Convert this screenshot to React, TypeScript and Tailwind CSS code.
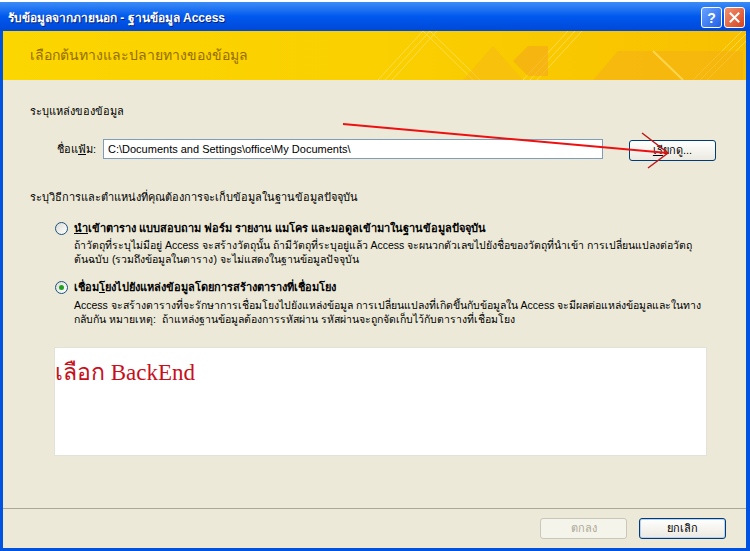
import React from "react";

const thai = "font-['Liberation_Sans','Tahoma','DejaVu_Sans',sans-serif]";

const Radio: React.FC<{ checked?: boolean }> = ({ checked }) => (
  <span className="w-[13px] h-[13px] rounded-full border border-[#1c5180] bg-gradient-to-br from-[#dcdcd5] to-white flex items-center justify-center shrink-0">
    {checked && <span className="w-[5px] h-[5px] rounded-full bg-[#21a121]" />}
  </span>
);

const App: React.FC = () => {
  return (
    <div className={`relative w-[750px] h-[551px] bg-[#0052e0] flex flex-col overflow-hidden ${thai} text-[11px] text-black whitespace-nowrap`}>
      {/* Title bar */}
      <div className="h-[31px] shrink-0 flex items-center pl-[8px] pr-[5px] pt-[2px] bg-gradient-to-b from-[#3b8cf5] via-[#0058ee] to-[#0048d8] border-t-2 border-t-white">
        <span className="text-white font-bold text-[12px] leading-none [text-shadow:1px_1px_0_#0a1e6e]">
          รับข้อมูลจากภายนอก - ฐานข้อมูล Access
        </span>
        <div className="ml-auto flex gap-[2px]">
          <div className="w-[21px] h-[21px] rounded-[3px] border border-white bg-gradient-to-br from-[#6aa2ff] to-[#1f5ee6] flex items-center justify-center text-white font-bold text-[14px] leading-none">
            ?
          </div>
          <div className="w-[21px] h-[21px] rounded-[3px] border border-white bg-gradient-to-br from-[#f2906d] to-[#d4401c] flex items-center justify-center">
            <svg width="11" height="11" viewBox="0 0 11 11">
              <path d="M1.5 1.5 L9.5 9.5 M9.5 1.5 L1.5 9.5" stroke="white" strokeWidth="2" strokeLinecap="square" />
            </svg>
          </div>
        </div>
      </div>

      <div className="flex-1 flex flex-col ml-[3px] mr-[4px] mb-[3px] bg-[#ece9d8]">
        {/* Yellow banner */}
        <div className="relative h-[49px] shrink-0 bg-gradient-to-r from-[#fcd600] via-[#fad000] to-[#f8c000] flex items-center pl-[27px] overflow-hidden">
          <svg className="absolute inset-0" width="743" height="49" viewBox="0 0 743 49">
            <g fill="none" stroke="#ffe36b" strokeWidth="1" opacity="0.7">
              <path d="M375 49 L420 0 M382 49 L427 0 M389 49 L434 0" />
              <path d="M520 49 L565 0 M527 49 L572 0 M534 49 L579 0" />
              <path d="M690 49 L739 0 M697 49 L746 0 M704 49 L753 0" />
              <path d="M420 0 L470 49 M427 0 L477 49" />
            </g>
            <path d="M510 30 L525 15 L545 15 L545 45 L525 45 Z" fill="#f4a81a" opacity="0.6" />
            <path d="M590 49 L615 20 L740 20 L740 49 Z" fill="#f5b015" opacity="0.6" />
            <path d="M460 49 L490 15 L520 49 Z" fill="#f6b818" opacity="0.5" />
            <path d="M650 20 L680 49" stroke="#ffe36b" strokeWidth="2" opacity="0.7" />
          </svg>
          <span className="relative text-[14px] text-[#946c00]">เลือกต้นทางและปลายทางของข้อมูล</span>
        </div>

        {/* Body */}
        <div className="flex-1 flex flex-col">
          <div className="pl-[27px] mt-[24px] leading-[14px]">ระบุแหล่งของข้อมูล</div>

          <div className="flex items-start mt-[21px]">
            <span className="ml-[54px] w-[46px] leading-[20px]">
              ชื่อแ<span className="underline">ฟ้</span>ม:
            </span>
            <div className="w-[500px] h-[20px] bg-white border border-[#7f9db9] flex items-center pl-[4px] text-[11px]">
              C:\Documents and Settings\office\My Documents\
            </div>
            <button className="ml-[26px] mt-[1px] w-[87px] h-[21px] rounded-[3px] border border-[#003c74] bg-gradient-to-b from-white to-[#ebe9e0] flex items-center justify-center text-[11px]">
              <span className="underline">เรี</span>ยกดู...
            </button>
          </div>

          <div className="pl-[27px] mt-[29px] leading-[14px]">
            ระบุวิธีการและตำแหน่งที่คุณต้องการจะเก็บข้อมูลในฐานข้อมูลปัจจุบัน
          </div>

          <div className="flex items-center mt-[17px] ml-[52px] leading-[14px]">
            <Radio />
            <span className="ml-[6px] font-bold">
              <span className="underline">น</span>ำเข้าตาราง แบบสอบถาม ฟอร์ม รายงาน แมโคร และมอดูลเข้ามาในฐานข้อมูลปัจจุบัน
            </span>
          </div>
          <div className="ml-[71px] mt-[3px] leading-[14px] text-[10.5px]">
            <div>ถ้าวัตถุที่ระบุไม่มีอยู่ Access จะสร้างวัตถุนั้น ถ้ามีวัตถุที่ระบุอยู่แล้ว Access จะผนวกตัวเลขไปยังชื่อของวัตถุที่นำเข้า การเปลี่ยนแปลงต่อวัตถุ</div>
            <div>ต้นฉบับ (รวมถึงข้อมูลในตาราง) จะไม่แสดงในฐานข้อมูลปัจจุบัน</div>
          </div>

          <div className="flex items-center mt-[14px] ml-[52px] leading-[14px]">
            <Radio checked />
            <span className="ml-[6px] font-bold">
              เชื่อม<span className="underline">โ</span>ยงไปยังแหล่งข้อมูลโดยการสร้างตารางที่เชื่อมโยง
            </span>
          </div>
          <div className="ml-[71px] mt-[4px] leading-[14px] text-[10.5px]">
            <div>Access จะสร้างตารางที่จะรักษาการเชื่อมโยงไปยังแหล่งข้อมูล การเปลี่ยนแปลงที่เกิดขึ้นกับข้อมูลใน Access จะมีผลต่อแหล่งข้อมูลและในทาง</div>
            <div>กลับกัน หมายเหตุ:&nbsp; ถ้าแหล่งฐานข้อมูลต้องการรหัสผ่าน รหัสผ่านจะถูกจัดเก็บไว้กับตารางที่เชื่อมโยง</div>
          </div>

          <div className="ml-[51px] mt-[21px] w-[653px] h-[109px] bg-white border border-[#e4e2d6] pt-[13px]">
            <span className="font-['Liberation_Serif','DejaVu_Serif',serif] text-[23px] leading-none text-[#c8101a]">
              เลือก BackEnd
            </span>
          </div>

          <div className="flex-1" />

          {/* Footer */}
          <div className="border-t border-t-[#aca899] shadow-[inset_0_1px_0_#fff]" />
          <div className="h-[39px] flex items-start justify-end pr-[20px] pt-[9px] gap-[12px]">
            <button className="w-[87px] h-[21px] rounded-[3px] border border-[#c9c7ba] bg-[#f5f4ea] text-[#aca899] text-[11px]">
              ตกลง
            </button>
            <button className="w-[87px] h-[21px] rounded-[3px] border border-[#003c74] bg-gradient-to-b from-white to-[#ebe9e0] text-[11px] shadow-[inset_0_0_0_1px_#b8d0f5]">
              ยกเลิก
            </button>
          </div>
        </div>
      </div>

      {/* Red annotation arrow */}
      <svg className="absolute inset-0 pointer-events-none" width="750" height="551" viewBox="0 0 750 551">
        <path d="M343 124 L668 153" stroke="#ee1010" strokeWidth="2" fill="none" />
        <path d="M642 133 L668 153 L648 168" stroke="#c0181a" strokeWidth="1.5" fill="none" />
      </svg>
    </div>
  );
};

export default App;
